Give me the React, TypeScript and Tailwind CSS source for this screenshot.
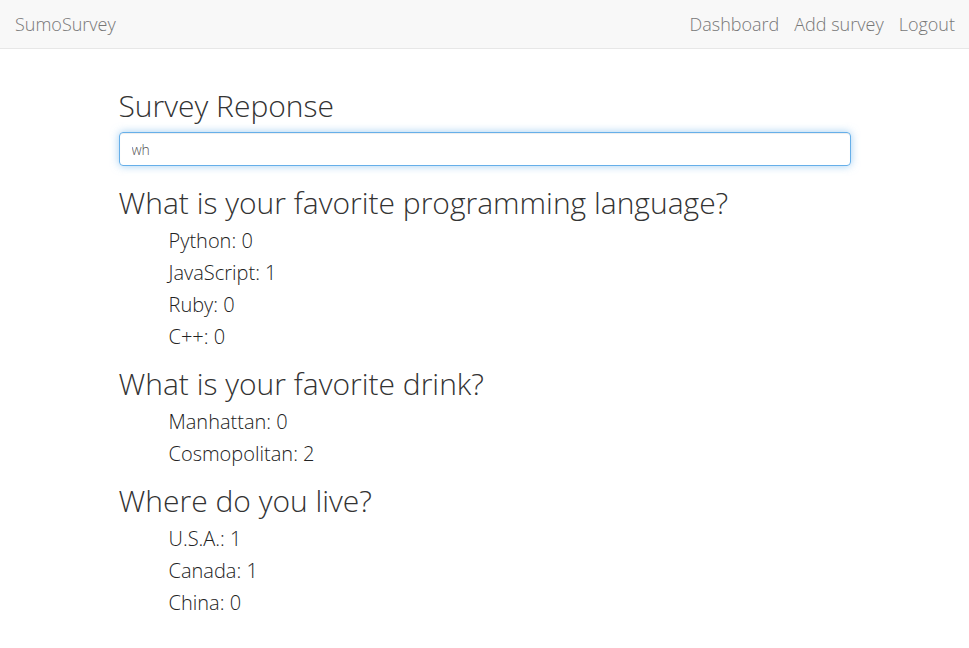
const questions = [
  {
    title: 'What is your favorite programming language?',
    answers: [
      ['Python', 0],
      ['JavaScript', 1],
      ['Ruby', 0],
      ['C++', 0],
    ],
  },
  {
    title: 'What is your favorite drink?',
    answers: [
      ['Manhattan', 0],
      ['Cosmopolitan', 2],
    ],
  },
  {
    title: 'Where do you live?',
    answers: [
      ['U.S.A.', 1],
      ['Canada', 1],
      ['China', 0],
    ],
  },
]

export default function App() {
  return (
    <div className="min-h-screen bg-white font-['Open_Sans',sans-serif] font-light text-[#333]">
      {/* Navbar */}
      <nav className="h-[49px] bg-[#f8f8f8] border-b border-[#e7e7e7] flex items-center justify-between pl-[15px] pr-[14px] pb-[1px] text-[#777] text-[18px]">
        <a href="#" className="leading-none">SumoSurvey</a>
        <div className="flex items-center gap-[15px]">
          <a href="#" className="leading-none">Dashboard</a>
          <a href="#" className="leading-none">Add survey</a>
          <a href="#" className="leading-none">Logout</a>
        </div>
      </nav>

      <main className="w-[732px] mx-auto">
        <h1 className="mt-[40px] text-[30px] leading-[33px]">Survey Reponse</h1>
        <input
          type="text"
          defaultValue="wh"
          autoFocus
          className="mt-[10px] w-full h-[34px] px-[12px] rounded-[4px] border border-[#66afe9] text-[14px] text-[#555] outline-none shadow-[inset_0_1px_1px_rgba(0,0,0,0.075),0_0_8px_rgba(102,175,233,0.6)]"
        />

        <div className="mt-[20px] flex flex-col gap-[14px]">
          {questions.map((q) => (
            <section key={q.title}>
              <h3 className="text-[30px] leading-[33px]">{q.title}</h3>
              <ul className="mt-[6px] pl-[50px] text-[20px] leading-[32px] text-[#222]">
                {q.answers.map(([name, count]) => (
                  <li key={name}>
                    {name}: {count}
                  </li>
                ))}
              </ul>
            </section>
          ))}
        </div>
      </main>
    </div>
  )
}
